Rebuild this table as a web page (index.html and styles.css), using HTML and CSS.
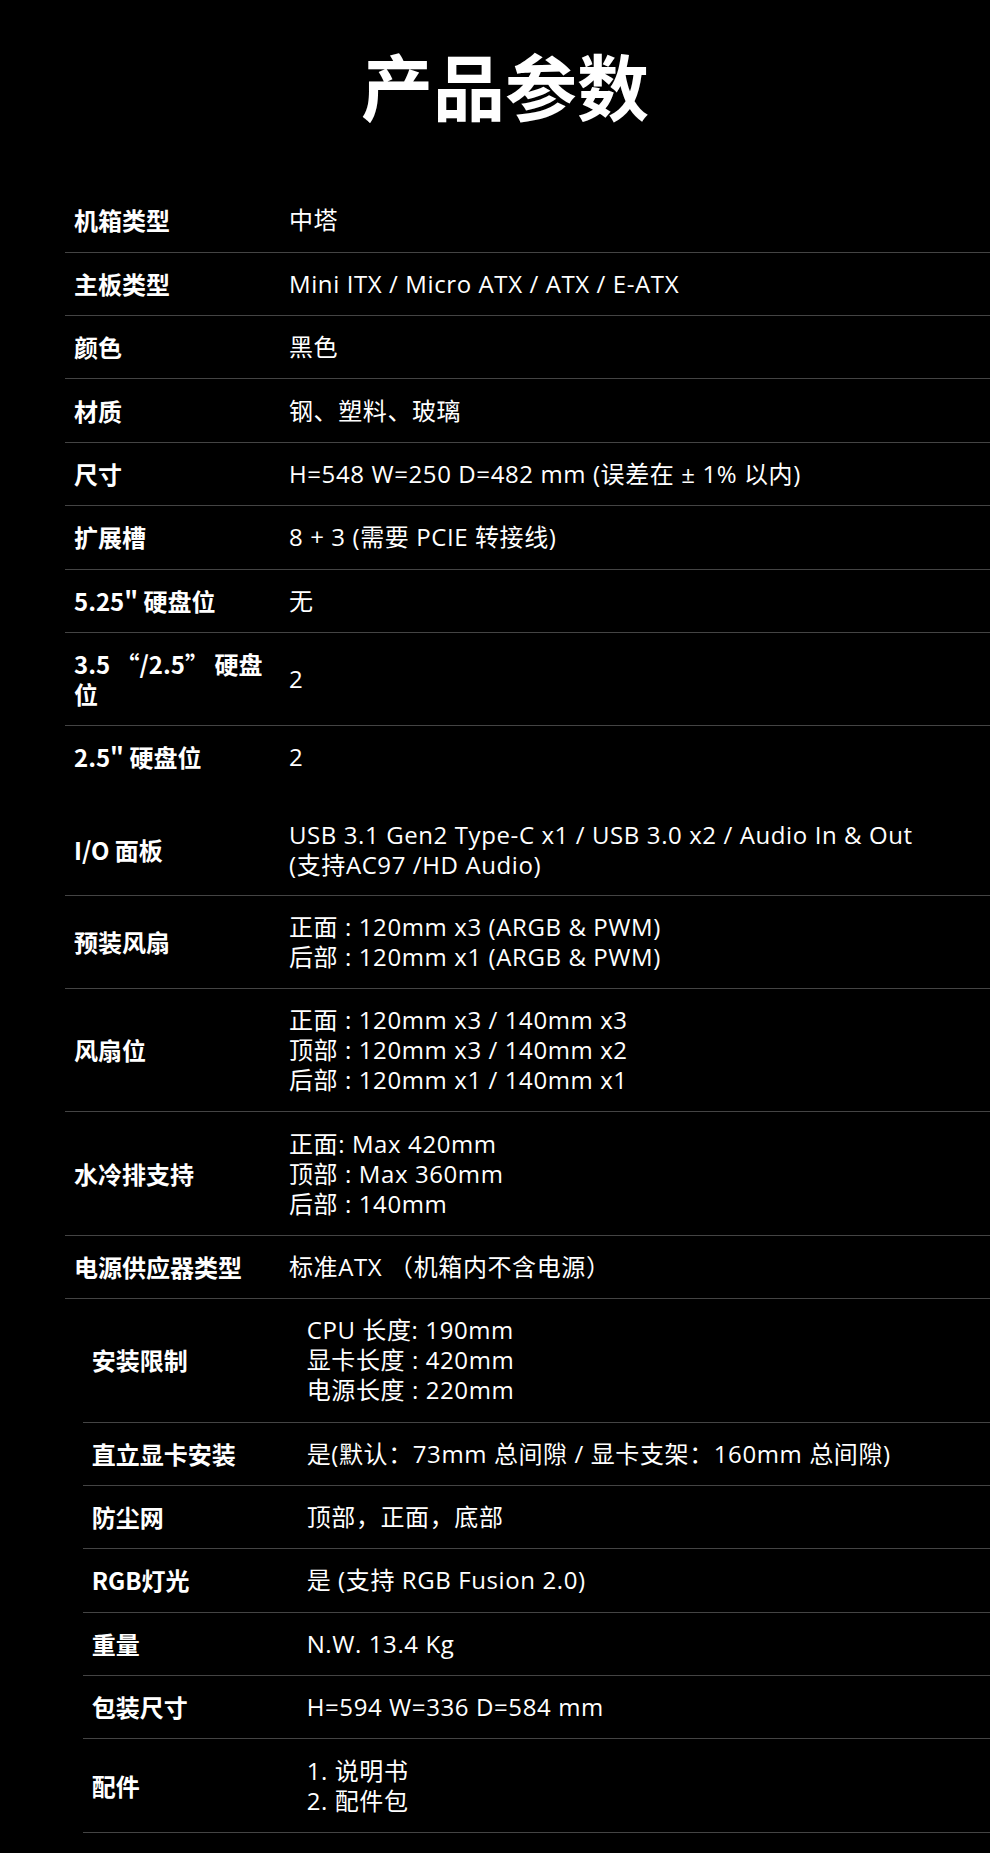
FILE: index.html
```html
<!DOCTYPE html>
<html lang="zh-CN">
<head>
<meta charset="utf-8">
<title>产品参数</title>
<link rel="stylesheet" href="styles.css">
</head>
<body>
<h1 class="title">产品参数</h1>
<div class="specs">
  <div class="row"><div class="label">机箱类型</div><div class="value">中塔</div></div>
  <div class="row"><div class="label">主板类型</div><div class="value">Mini ITX / Micro ATX / ATX / E-ATX</div></div>
  <div class="row"><div class="label">颜色</div><div class="value">黑色</div></div>
  <div class="row"><div class="label">材质</div><div class="value">钢、塑料、玻璃</div></div>
  <div class="row"><div class="label">尺寸</div><div class="value">H=548 W=250 D=482 mm (误差在 ± 1% 以内)</div></div>
  <div class="row"><div class="label">扩展槽</div><div class="value">8 + 3 (需要 PCIE 转接线)</div></div>
  <div class="row"><div class="label">5.25" 硬盘位</div><div class="value">无</div></div>
  <div class="row"><div class="label">3.5 “/2.5” 硬盘位</div><div class="value">2</div></div>
  <div class="row row-open"><div class="label">2.5" 硬盘位</div><div class="value">2</div></div>
  <div class="row row-io"><div class="label">I/O 面板</div><div class="value">USB 3.1 Gen2 Type-C x1 / USB 3.0 x2 / Audio In &amp; Out<br>(支持AC97 /HD Audio)</div></div>
  <div class="row"><div class="label">预装风扇</div><div class="value">正面 : 120mm x3 (ARGB &amp; PWM)<br>后部 : 120mm x1 (ARGB &amp; PWM)</div></div>
  <div class="row"><div class="label">风扇位</div><div class="value">正面 : 120mm x3 / 140mm x3<br>顶部 : 120mm x3 / 140mm x2<br>后部 : 120mm x1 / 140mm x1</div></div>
  <div class="row"><div class="label">水冷排支持</div><div class="value">正面: Max 420mm<br>顶部 : Max 360mm<br>后部 : 140mm</div></div>
  <div class="row"><div class="label">电源供应器类型</div><div class="value">标准ATX （机箱内不含电源）</div></div>
  <div class="specs nested">
    <div class="row"><div class="label">安装限制</div><div class="value">CPU 长度: 190mm<br>显卡长度 : 420mm<br>电源长度 : 220mm</div></div>
    <div class="row"><div class="label">直立显卡安装</div><div class="value">是(默认：73mm 总间隙 / 显卡支架：160mm 总间隙)</div></div>
    <div class="row"><div class="label">防尘网</div><div class="value">顶部，正面，底部</div></div>
    <div class="row"><div class="label">RGB灯光</div><div class="value">是 (支持 RGB Fusion 2.0)</div></div>
    <div class="row"><div class="label">重量</div><div class="value">N.W. 13.4 Kg</div></div>
    <div class="row"><div class="label">包装尺寸</div><div class="value">H=594 W=336 D=584 mm</div></div>
    <div class="row"><div class="label">配件</div><div class="value">1. 说明书<br>2. 配件包</div></div>
  </div>
</div>
</body>
</html>
```
FILE: styles.css
```css
html, body {
  margin: 0;
  padding: 0;
  background: #000;
}
body {
  color: #fff;
  font-family: "Open Sans", "Noto Sans CJK SC", sans-serif;
  font-size: 24px;
  min-height: 1853px;
}
.title {
  margin: 0;
  padding: 34px 0 0 20px;
  height: 189.3px;
  box-sizing: border-box;
  font-family: "Noto Sans CJK SC", sans-serif;
  font-size: 72px;
  font-weight: 700;
  line-height: 100px;
  text-align: center;
}
.specs {
  margin-left: 65px;
}
.specs.nested {
  margin-left: 17.7px;
}
.row {
  display: grid;
  grid-template-columns: 215px 1fr;
  align-items: center;
  padding: 16.2px 0;
  border-bottom: 1px solid #444;
  line-height: 30px;
}
.row-open {
  border-bottom-color: transparent;
}
.row-io {
  padding: 30.8px 0 14.2px;
}
.label {
  padding: 0 9px;
  font-weight: 700;
  font-family: "Noto Sans CJK SC", sans-serif;
}
.value {
  padding-left: 9px;
  letter-spacing: 0.6px;
}
```
